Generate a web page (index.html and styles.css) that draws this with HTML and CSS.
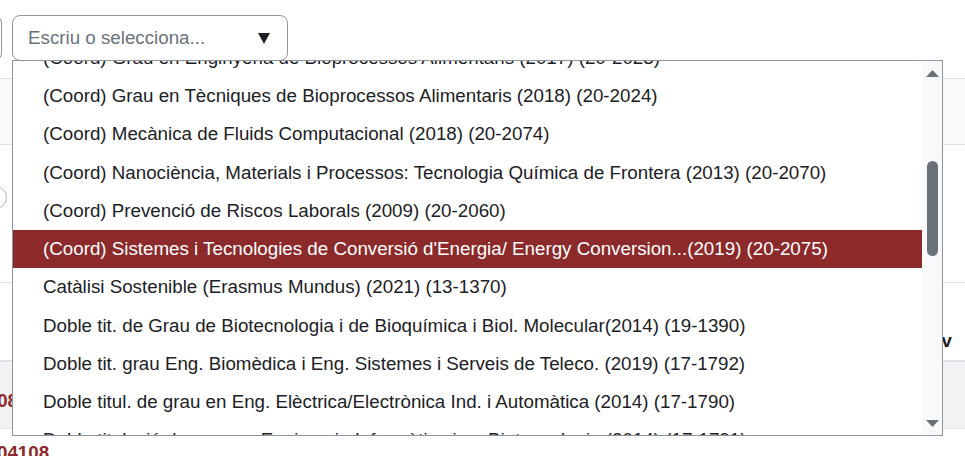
FILE: index.html
```html
<!DOCTYPE html>
<html lang="ca">
<head>
<meta charset="utf-8">
<title>Selector</title>
<link rel="stylesheet" href="styles.css">
</head>
<body>
<div class="page">
  <div class="toolbar">
    <div class="prev-box"></div>
    <div class="combo">
      <div class="combo-input">
        <span class="placeholder">Escriu o selecciona...</span>
        <svg class="caret" width="12" height="11" viewBox="0 0 12 11"><path d="M0 0 L12 0 L6 11 Z" fill="#1d2125"/></svg>
      </div>
      <div class="dropdown">
        <div class="list">
          <div class="items">
            <div class="item">(Coord) Grau en Enginyeria de Bioprocessos Alimentaris (2017) (20-2023)</div>
            <div class="item">(Coord) Grau en Tècniques de Bioprocessos Alimentaris (2018) (20-2024)</div>
            <div class="item">(Coord) Mecànica de Fluids Computacional (2018) (20-2074)</div>
            <div class="item">(Coord) Nanociència, Materials i Processos: Tecnologia Química de Frontera (2013) (20-2070)</div>
            <div class="item">(Coord) Prevenció de Riscos Laborals (2009) (20-2060)</div>
            <div class="item selected">(Coord) Sistemes i Tecnologies de Conversió d'Energia/ Energy Conversion...(2019) (20-2075)</div>
            <div class="item">Catàlisi Sostenible (Erasmus Mundus) (2021) (13-1370)</div>
            <div class="item">Doble tit. de Grau de Biotecnologia i de Bioquímica i Biol. Molecular(2014) (19-1390)</div>
            <div class="item">Doble tit. grau Eng. Biomèdica i Eng. Sistemes i Serveis de Teleco. (2019) (17-1792)</div>
            <div class="item">Doble titul. de grau en Eng. Elèctrica/Electrònica Ind. i Automàtica (2014) (17-1790)</div>
            <div class="item">Doble titulació de grau en Enginyeria Informàtica i en Biotecnologia (2014) (17-1791)</div>
          </div>
        </div>
        <div class="scrollbar">
          <svg class="arrow" width="13" height="8" viewBox="0 0 13 8"><path d="M6.5 0 L13 7 L0 7 Z" fill="#6a7178"/></svg>
          <div class="thumb"></div>
          <div class="track-rest"></div>
          <svg class="arrow" width="13" height="8" viewBox="0 0 13 8"><path d="M0 0 L13 0 L6.5 7 Z" fill="#6a7178"/></svg>
        </div>
      </div>
    </div>
  </div>

  <div class="table">
    <div class="row head-row"></div>
    <div class="row radio-row"><span class="radio"></span></div>
    <div class="row label-row"><span class="col-label">Nov</span></div>
    <div class="row grey-row"><span class="code">2024108</span></div>
    <div class="row plain-row"><span class="code code2">04108</span></div>
  </div>
</div>
</body>
</html>
```

FILE: styles.css
```css
* { box-sizing: border-box; }

html, body {
  margin: 0;
  padding: 0;
  background: #ffffff;
}

body {
  font-family: "Liberation Sans", Arial, sans-serif;
  color: #1d2125;
  width: 965px;
  height: 456px;
  overflow: hidden;
}

.page {
  position: relative;
}

.toolbar {
  display: flex;
  gap: 10px;
  padding-top: 15px;
  height: 78px;
}

.prev-box {
  width: 40px;
  height: 46px;
  margin-left: -38px;
  border: 1px solid #8f959e;
  border-radius: 8px;
}

.combo {
  position: relative;
  z-index: 5;
}

.combo-input {
  width: 276px;
  height: 46px;
  border: 1px solid #8f959e;
  border-radius: 8px;
  display: flex;
  align-items: center;
  justify-content: space-between;
  padding: 0 17px 0 15px;
  font-size: 18.75px;
  background: #fff;
}

.placeholder {
  color: #6a737b;
}

.caret {
  display: block;
  flex: none;
  margin-top: 1px;
}

.dropdown {
  position: absolute;
  left: 0;
  top: 45px;
  width: 931px;
  height: 376px;
  border: 1px solid #8f959e;
  background: #fff;
  display: flex;
}

.list {
  flex: 1;
  overflow: hidden;
}

.items {
  margin-top: -22.25px;
}

.item {
  height: 38.25px;
  line-height: 38.25px;
  padding-left: 30px;
  font-size: 18.75px;
  white-space: nowrap;
  color: #1d2125;
}

.item.selected {
  background: #8c2a2b;
  color: #ffffff;
}

.scrollbar {
  width: 20px;
  background: #f8f9fa;
  display: flex;
  flex-direction: column;
  align-items: center;
  padding: 9px 0 7px 1px;
}

.arrow {
  display: block;
  flex: none;
}

.thumb {
  width: 11px;
  height: 95px;
  margin-top: 83px;
  border-radius: 6px;
  background: #6a7178;
  flex: none;
}

.track-rest {
  flex: 1;
}

.table {
  display: flex;
  flex-direction: column;
}

.row {
  border-top: 1px solid #dee2e6;
  display: flex;
  align-items: center;
}

.head-row {
  height: 66px;
  background: #f8f9fa;
}

.radio-row {
  height: 138px;
}

.radio {
  width: 23px;
  height: 23px;
  border: 1px solid #adb5bd;
  border-radius: 50%;
  margin-left: -16px;
  margin-top: -33px;
}

.label-row {
  height: 78px;
  justify-content: flex-end;
  padding-right: 13px;
}

.col-label {
  font-weight: bold;
  font-size: 18.75px;
  color: #1d2125;
  margin-top: 38px;
}

.grey-row {
  height: 69px;
  background: #f2f2f2;
  border-top: 2px solid #dee2e6;
  border-bottom: 1px solid #dee2e6;
  overflow: hidden;
}

.code {
  font-weight: bold;
  font-size: 18.75px;
  color: #8c2a2b;
  white-space: nowrap;
}

.grey-row .code {
  margin-left: -55px;
  margin-top: 12px;
}

.plain-row {
  border-top: none;
  height: 40px;
  align-items: flex-start;
}

.code2 {
  margin-left: -3px;
  margin-top: 13px;
}
```
